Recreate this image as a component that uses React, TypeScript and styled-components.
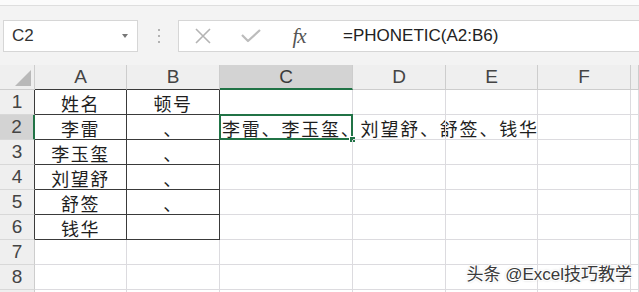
import React from 'react';
import styled, { createGlobalStyle, css } from 'styled-components';

const GlobalStyle = createGlobalStyle`
  html, body {
    margin: 0;
    padding: 0;
    background: #ffffff;
  }
  body {
    font-family: "Liberation Sans", "Noto Sans CJK SC", sans-serif;
  }
`;

const GREEN = '#217346';
const DARK = '#3a3a3a';
const GRID = '#dcdbdf';
const HEAD_LINE = '#cdcdcd';

const columns = ['A', 'B', 'C', 'D', 'E', 'F', ''];
const data: string[][] = [
  ['姓名', '顿号'],
  ['李雷', '、'],
  ['李玉玺', '、'],
  ['刘望舒', '、'],
  ['舒签', '、'],
  ['钱华', ''],
];
// row 9 only peeks in at the bottom edge, its number is below the fold
const rowCount = 9;
const joined = '李雷、李玉玺、刘望舒、舒签、钱华';

const App: React.FC = () => {
  return (
    <>
      <GlobalStyle />
      <Page>
        <RibbonEdge />
        <Toolbar>
          <NameBox>
            <NameText>C2</NameText>
            <DropArrow />
          </NameBox>
          <Grip>
            <Dot />
            <Dot />
            <Dot />
          </Grip>
          <FormulaBox>
            <IconSlot>
              <svg width="18" height="16" viewBox="0 0 18 16">
                <path d="M2 1 L16 15 M16 1 L2 15" stroke="#b4b4b4" strokeWidth="1.6" fill="none" />
              </svg>
            </IconSlot>
            <IconSlot>
              <svg width="20" height="14" viewBox="0 0 20 14">
                <path d="M1 6 L7 12 L19 1" stroke="#bcbcbc" strokeWidth="2.2" fill="none" strokeLinejoin="round" />
              </svg>
            </IconSlot>
            <IconSlot>
              <FxLabel>fx</FxLabel>
            </IconSlot>
            <FormulaText>=PHONETIC(A2:B6)</FormulaText>
          </FormulaBox>
        </Toolbar>

        <Sheet>
          <Corner>
            <CornerTriangle />
          </Corner>
          {columns.map((c, i) => (
            <ColHead key={c + i} $active={c === 'C'} $boxed={i < 2}>
              {c}
            </ColHead>
          ))}

          {Array.from({ length: rowCount }).map((_, r) => (
            <React.Fragment key={r}>
              <RowHead $active={r === 1} $boxed={r < 6}>
                {r < 8 ? r + 1 : null}
              </RowHead>
              {columns.map((c, ci) => {
                const inTable = r < 6 && ci < 2;
                const value = inTable ? data[r][ci] : '';
                const isSelected = r === 1 && c === 'C';
                return (
                  <Cell key={ci} $boxed={inTable} $left={isSelected}>
                    {isSelected ? (
                      <>
                        <Overflow>{joined}</Overflow>
                        <Selection>
                          <FillHandle />
                        </Selection>
                      </>
                    ) : (
                      value
                    )}
                  </Cell>
                );
              })}
            </React.Fragment>
          ))}
        </Sheet>
        <Watermark>头条 @Excel技巧教学</Watermark>
      </Page>
    </>
  );
};

const Page = styled.div`
  position: relative;
  width: 639px;
  height: 292px;
  overflow: hidden;
  background: #ffffff;
`;

const RibbonEdge = styled.div`
  height: 5px;
  background: #fbfbfb;
  border-bottom: 1px solid #dedede;
`;

const Toolbar = styled.div`
  display: flex;
  align-items: stretch;
  height: 59px;
  padding: 14px 0 13px 3px;
  box-sizing: border-box;
  background: #f3f3f3;
`;

const NameBox = styled.div`
  width: 135px;
  display: flex;
  align-items: center;
  justify-content: space-between;
  background: #ffffff;
  border: 1px solid #d6d6d6;
  box-sizing: border-box;
  padding: 0 9px 0 8px;
`;

const NameText = styled.span`
  font-size: 17px;
  color: #333333;
`;

const DropArrow = styled.span`
  width: 0;
  height: 0;
  border-left: 3.5px solid transparent;
  border-right: 3.5px solid transparent;
  border-top: 4px solid #777777;
`;

const Grip = styled.div`
  width: 40px;
  display: flex;
  flex-direction: column;
  align-items: center;
  justify-content: center;
  gap: 4px;
  padding-left: 2px;
  box-sizing: border-box;
`;

const Dot = styled.span`
  width: 2px;
  height: 2px;
  background: #9c9c9c;
  border-radius: 50%;
`;

const FormulaBox = styled.div`
  flex: 1;
  display: flex;
  align-items: center;
  background: #ffffff;
  border: 1px solid #d6d6d6;
  border-right: none;
`;

const IconSlot = styled.div`
  width: 48px;
  display: flex;
  justify-content: center;
  align-items: center;
`;

const FxLabel = styled.span`
  font-family: "Liberation Serif", serif;
  font-style: italic;
  font-size: 21px;
  color: #555555;
  letter-spacing: -1px;
`;

const FormulaText = styled.span`
  margin-left: 20px;
  font-size: 17px;
  color: #222222;
`;

const Sheet = styled.div`
  display: grid;
  grid-template-columns: 35px 92px 93px 133px 93px 92px 93px 1fr;
  grid-auto-rows: 25px;
  background: #ffffff;
`;

const headBase = css`
  box-sizing: border-box;
  background: #efefef;
  color: #444444;
  font-size: 19px;
  display: flex;
  align-items: center;
  justify-content: center;
`;

const Corner = styled.div`
  ${headBase};
  position: relative;
  border-right: 1px solid ${HEAD_LINE};
  border-bottom: 1px solid ${HEAD_LINE};
`;

const CornerTriangle = styled.span`
  position: absolute;
  right: 3px;
  bottom: 3px;
  width: 0;
  height: 0;
  border-left: 16px solid transparent;
  border-bottom: 16px solid #b9b9b9;
`;

const ColHead = styled.div<{ $active?: boolean; $boxed?: boolean }>`
  ${headBase};
  border-right: 1px solid ${HEAD_LINE};
  border-bottom: 1px solid ${({ $boxed }) => ($boxed ? DARK : HEAD_LINE)};
  ${({ $active }) =>
    $active &&
    css`
      background: #d3d3d3;
      color: #3a3a3a;
      border-bottom: 2px solid ${GREEN};
    `}
`;

const RowHead = styled.div<{ $active?: boolean; $boxed?: boolean }>`
  ${headBase};
  border-bottom: 1px solid #d8d8d8;
  border-right: 1px solid ${({ $boxed }) => ($boxed ? DARK : HEAD_LINE)};
  ${({ $active }) =>
    $active &&
    css`
      background: #d3d3d3;
      border-right: 2px solid ${GREEN};
    `}
`;

const Cell = styled.div<{ $boxed?: boolean; $left?: boolean }>`
  position: relative;
  box-sizing: border-box;
  display: flex;
  align-items: center;
  justify-content: ${({ $left }) => ($left ? 'flex-start' : 'center')};
  padding-top: 1px;
  font-family: "Noto Sans CJK SC", sans-serif;
  font-size: 18px;
  letter-spacing: 1.5px;
  color: #1e1e1e;
  white-space: nowrap;
  border-right: 1px solid ${({ $boxed }) => ($boxed ? DARK : GRID)};
  border-bottom: 1px solid ${({ $boxed }) => ($boxed ? DARK : GRID)};
`;

const Overflow = styled.span`
  padding-left: 2px;
  letter-spacing: 1.8px;
`;

const Selection = styled.div`
  position: absolute;
  top: -1px;
  left: -1px;
  right: -1px;
  bottom: -1px;
  border: 2px solid ${GREEN};
  pointer-events: none;
`;

const FillHandle = styled.span`
  position: absolute;
  right: -5px;
  bottom: -5px;
  width: 5px;
  height: 5px;
  background: ${GREEN};
  border: 1px solid #ffffff;
`;

const Watermark = styled.div`
  position: absolute;
  right: 7px;
  bottom: 7px;
  font-family: "Liberation Sans", "Noto Sans CJK SC", sans-serif;
  font-size: 17px;
  color: #3a3a3a;
  white-space: nowrap;
  text-shadow: 1px 1px 0 #ffffff, -1px -1px 0 #ffffff, 1px -1px 0 #ffffff, -1px 1px 0 #ffffff, 0 0 3px #9a9a9a;
`;

export default App;
